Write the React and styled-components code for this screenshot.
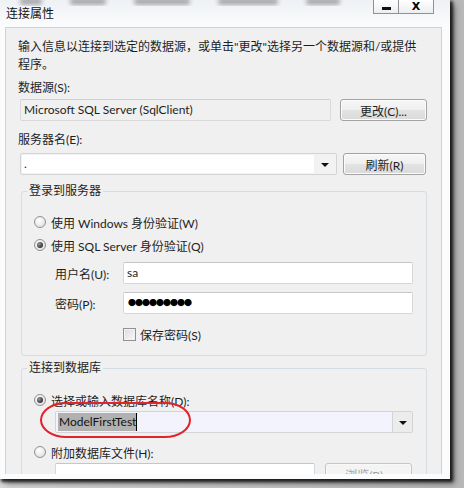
import styled, { createGlobalStyle } from "styled-components";

const GlobalStyle = createGlobalStyle`
  html, body {
    margin: 0;
    padding: 0;
    background: #c4c4c4;
  }
  body {
    font-family: "Lato", "Noto Sans CJK SC", sans-serif;
    font-size: 12px;
    color: #1e1e1e;
  }
`;

const Frame = styled.div`
  width: 464px;
  height: 488px;
  overflow: hidden;
  background: linear-gradient(90deg, #d8d8d8, #b8b8b8);
`;

const Window = styled.div`
  width: 450px;
  height: 479px;
  background: linear-gradient(180deg, #eef1f5 0px, #fbfcfd 27px, #fbfcfd 100%);
  box-shadow: 2px 2px 3px 1px rgba(0, 0, 0, 0.8), 5px 5px 6px rgba(0, 0, 0, 0.35);
  display: flex;
  flex-direction: column;
`;

const TitleBar = styled.div`
  height: 27px;
  display: flex;
  align-items: flex-start;
  padding-right: 16px;
`;

const TitleLeft = styled.div`
  flex: 1;
  display: flex;
  flex-direction: column;
`;

const BlurRow = styled.div`
  height: 6px;
  display: flex;
  gap: 28px;
  padding-left: 20px;
  overflow: hidden;
`;

const Blob = styled.span`
  width: ${(p) => p.$w}px;
  height: 7px;
  margin-top: -2px;
  background: #a8aaad;
  border-radius: 3px;
  filter: blur(2px);
`;

const Title = styled.div`
  padding-left: 6px;
  line-height: 16px;
  font-size: 12px;
  color: #111;
`;

const CaptionButton = styled.div`
  width: ${(p) => p.$w}px;
  height: 14px;
  box-sizing: border-box;
  border: 1px solid #8e9196;
  border-top: none;
  border-left-width: ${(p) => (p.$first ? 1 : 0)}px;
  background: linear-gradient(#ffffff, #eceef1);
  display: flex;
  align-items: center;
  justify-content: center;
  font-family: "DejaVu Sans", sans-serif;
  font-weight: bold;
  font-size: 11px;
  line-height: 1;
  color: #000;
`;

const MinBar = styled.span`
  width: 9px;
  height: 3px;
  margin-top: 3px;
  background: #111;
`;

const Panel = styled.div`
  margin-left: 5px;
  width: 437px;
  height: 447px;
  box-sizing: border-box;
  border: 1px solid #cfd3d8;
  border-bottom: none;
  background: #f0f0f0;
  overflow: hidden;
  padding: 10px 0 0 12px;
`;

const Desc = styled.p`
  margin: 0;
  white-space: nowrap;
  line-height: 18px;
`;

const Label = styled.div`
  line-height: 16px;
  margin-top: ${(p) => p.$top || 0}px;
  margin-bottom: ${(p) => p.$bottom || 0}px;
`;

const Row = styled.div`
  display: flex;
  align-items: center;
  gap: ${(p) => p.$gap || 0}px;
  margin-left: ${(p) => p.$left || 0}px;
  margin-top: ${(p) => p.$top || 0}px;
`;

const TextBox = styled.div`
  width: ${(p) => p.$w}px;
  height: 22px;
  box-sizing: border-box;
  border: 1px solid ${(p) => (p.$readonly ? "#d9d9d9" : "#d5d7da")};
  border-top-color: ${(p) => (p.$readonly ? "#cfcfcf" : "#c4c6c9")};
  background: ${(p) => (p.$readonly ? "#f0f0f0" : "#ffffff")};
  border-radius: 2px;
  display: flex;
  align-items: center;
  padding-left: 3px;
  line-height: 1;
  white-space: nowrap;
`;

const Dots = styled.span`
  font-family: "Noto Sans CJK SC", sans-serif;
  font-size: 8px;
  letter-spacing: -1px;
  padding-left: 1px;
  color: #000;
`;

const Button = styled.div`
  width: ${(p) => p.$w}px;
  height: 22px;
  box-sizing: border-box;
  border: 1px solid ${(p) => (p.$disabled ? "#c5c5c5" : "#a3a3a3")};
  border-radius: 3px;
  background: ${(p) =>
    p.$disabled
      ? "#f4f4f4"
      : "linear-gradient(#f7f7f7 0%, #efefef 50%, #e3e3e3 51%, #dadada 100%)"};
  box-shadow: inset 0 0 0 1px ${(p) => (p.$disabled ? "#f8f8f8" : "#fbfbfb")};
  display: flex;
  align-items: center;
  justify-content: center;
  color: ${(p) => (p.$disabled ? "#a0a0a0" : "#1e1e1e")};
`;

const Combo = styled.div`
  width: ${(p) => p.$w}px;
  height: 22px;
  box-sizing: border-box;
  border: 1px solid #d2d4d7;
  border-radius: 2px;
  background: ${(p) => (p.$tint ? "#f3f3fd" : "#f2f2f2")};
  display: flex;
  position: relative;
`;

const ComboField = styled.div`
  flex: 1;
  background: ${(p) => (p.$tint ? "#f3f3fd" : "#ffffff")};
  margin: ${(p) => (p.$tint ? "0" : "1px 0 1px 1px")};
  display: flex;
  align-items: center;
  padding-left: 2px;
  line-height: 1;
`;

const DropButton = styled.div`
  width: ${(p) => p.$w}px;
  display: flex;
  align-items: center;
  justify-content: center;
  border-left: ${(p) => (p.$split ? "1px solid #d2d4d7" : "none")};
  background: ${(p) => (p.$split ? "#ececec" : "transparent")};
`;

const Arrow = styled.span`
  width: 0;
  height: 0;
  border-left: 4px solid transparent;
  border-right: 4px solid transparent;
  border-top: 4px solid #111;
  margin-top: 1px;
`;

const Selected = styled.span`
  background: #b1b1b1;
  border-right: 1px solid #000;
  padding: 3px 0 3px 1px;
  color: #111;
`;

const Group = styled.fieldset`
  margin: ${(p) => p.$top}px 0 0 3px;
  width: 406px;
  box-sizing: border-box;
  height: ${(p) => p.$h}px;
  border: 1px solid #d5dde3;
  border-radius: 3px;
  padding: 0;
`;

const Legend = styled.legend`
  margin-left: 5px;
  padding: 0 2px;
  line-height: 16px;
`;

const GroupBody = styled.div`
  padding: ${(p) => p.$top}px 0 0 12px;
  display: flex;
  flex-direction: column;
`;

const Option = styled.div`
  display: flex;
  align-items: center;
  gap: 5px;
  height: 16px;
  margin-top: ${(p) => p.$top || 0}px;
`;

const Radio = styled.span`
  width: 12px;
  height: 12px;
  box-sizing: border-box;
  border-radius: 50%;
  border: 1px solid #8f9194;
  background: radial-gradient(circle at 40% 35%, #ffffff 0%, #e4e4e4 70%, #cfcfcf 100%);
  display: flex;
  align-items: center;
  justify-content: center;

  &::after {
    content: "";
    display: ${(p) => (p.$checked ? "block" : "none")};
    width: 6px;
    height: 6px;
    border-radius: 50%;
    background: radial-gradient(circle at 35% 35%, #9a9a9a, #333 70%);
  }
`;

const Check = styled.span`
  width: 13px;
  height: 13px;
  box-sizing: border-box;
  border: 1px solid #8f9194;
  background: linear-gradient(135deg, #dcdcdc, #fafafa);
  box-shadow: inset 0 0 0 1px #f2f2f2;
`;

const FieldLabel = styled.div`
  width: 68px;
`;

const Highlight = styled.div`
  position: absolute;
  left: -16px;
  top: -10px;
  width: 151px;
  height: 36px;
  box-sizing: border-box;
  border: 2.5px solid #e3232b;
  border-radius: 26px / 18px;
  pointer-events: none;
`;

export default function App() {
  return (
    <>
      <GlobalStyle />
      <Frame>
        <Window>
          <TitleBar>
            <TitleLeft>
              <BlurRow>
                <Blob $w={22} />
                <Blob $w={36} />
                <Blob $w={56} />
                <Blob $w={60} />
                <Blob $w={34} />
              </BlurRow>
              <Title>连接属性</Title>
            </TitleLeft>
            <CaptionButton $w={26} $first>
              <MinBar />
            </CaptionButton>
            <CaptionButton $w={35}>X</CaptionButton>
          </TitleBar>

          <Panel>
            <Desc>
              输入信息以连接到选定的数据源，或单击"更改"选择另一个数据源和/或提供
              <br />
              程序。
            </Desc>

            <Label $top={6} $bottom={3}>数据源(S):</Label>
            <Row $gap={9} $left={2}>
              <TextBox $w={311} $readonly>
                Microsoft SQL Server (SqlClient)
              </TextBox>
              <Button $w={87}>更改(C)...</Button>
            </Row>

            <Label $top={11} $bottom={5}>服务器名(E):</Label>
            <Row $gap={6} $left={2}>
              <Combo $w={317}>
                <ComboField>.</ComboField>
                <DropButton $w={22}>
                  <Arrow />
                </DropButton>
              </Combo>
              <Button $w={83}>刷新(R)</Button>
            </Row>

            <Group $top={8} $h={173}>
              <Legend>登录到服务器</Legend>
              <GroupBody $top={15}>
                <Option>
                  <Radio />
                  使用 Windows 身份验证(W)
                </Option>
                <Option $top={7}>
                  <Radio $checked />
                  使用 SQL Server 身份验证(Q)
                </Option>
                <Row $left={21} $top={9}>
                  <FieldLabel>用户名(U):</FieldLabel>
                  <TextBox $w={290}>sa</TextBox>
                </Row>
                <Row $left={21} $top={8}>
                  <FieldLabel>密码(P):</FieldLabel>
                  <TextBox $w={290}>
                    <Dots>●●●●●●●●●</Dots>
                  </TextBox>
                </Row>
                <Row $left={89} $gap={4} $top={12}>
                  <Check />
                  保存密码(S)
                </Row>
              </GroupBody>
            </Group>

            <Group $top={4} $h={120}>
              <Legend>连接到数据库</Legend>
              <GroupBody $top={16}>
                <Option>
                  <Radio $checked />
                  选择或输入数据库名称(D):
                </Option>
                <Row $left={21} $top={3}>
                  <Combo $w={358} $tint>
                    <ComboField $tint>
                      <Selected>ModelFirstTest</Selected>
                    </ComboField>
                    <DropButton $w={19} $split>
                      <Arrow />
                    </DropButton>
                    <Highlight />
                  </Combo>
                </Row>
                <Option $top={11}>
                  <Radio />
                  附加数据库文件(H):
                </Option>
                <Row $left={21} $gap={10} $top={3}>
                  <TextBox $w={260} />
                  <Button $w={87} $disabled>
                    浏览(B)...
                  </Button>
                </Row>
              </GroupBody>
            </Group>
          </Panel>
        </Window>
      </Frame>
    </>
  );
}
